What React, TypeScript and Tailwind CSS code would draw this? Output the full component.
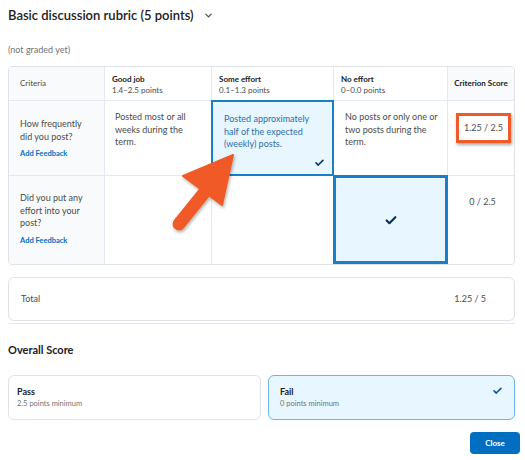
import { ChevronDown } from 'lucide-react';

const font = { fontFamily: 'Lato, "Noto Sans", sans-serif' };

function Check({ className = '' }: { className?: string }) {
  return (
    <svg viewBox="0 0 16 16" className={className} fill="none" stroke="currentColor" strokeWidth={2.4} strokeLinecap="round" strokeLinejoin="round">
      <path d="M3 8.5l3.2 3.2L13 4.8" />
    </svg>
  );
}

export default function App() {
  return (
    <div style={font} className="relative w-[525px] h-[460px] bg-white text-[#202122] overflow-hidden">
      <div className="px-2 pt-[6px]">
        {/* Title */}
        <div className="flex items-center gap-[9px] h-[18px]">
          <h1 className="text-[13px] leading-[18px] font-semibold">Basic discussion rubric (5 points)</h1>
          <ChevronDown className="w-[11px] h-[11px] text-[#494c4e]" strokeWidth={2.6} />
        </div>
        <div className="mt-[20px] text-[9px] leading-[12px] text-[#6e7477]">(not graded yet)</div>

        {/* Rubric table */}
        <div className="mt-[10px] w-[507px] border border-[#dfe3e8] rounded-[4px] overflow-hidden grid grid-cols-[96px_107px_122px_114px_1fr] grid-rows-[34px_75px_88px] text-[9px] leading-[12.5px] text-[#494c4e]">
          {/* header */}
          <div className="bg-[#f9fafb] border-r border-b border-[#e3e9f1] flex items-center pl-[11px] text-[8px]">Criteria</div>
          <div className="border-r border-b border-[#e3e9f1] pl-[7px] pt-[7px] text-[8px] leading-[11px]">
            <div className="font-bold text-[#202122]">Good job</div>
            <div>1.4–2.5 points</div>
          </div>
          <div className="border-r border-b border-[#e3e9f1] pl-[7px] pt-[7px] text-[8px] leading-[11px]">
            <div className="font-bold text-[#202122]">Some effort</div>
            <div>0.1–1.3 points</div>
          </div>
          <div className="border-r border-b border-[#e3e9f1] pl-[7px] pt-[7px] text-[8px] leading-[11px]">
            <div className="font-bold text-[#202122]">No effort</div>
            <div>0–0.0 points</div>
          </div>
          <div className="bg-[#f9fafb] border-b border-[#e3e9f1] flex items-center justify-center font-bold text-[8px] text-[#202122]">Criterion Score</div>

          {/* row 1 */}
          <div className="bg-[#f9fafb] border-r border-b border-[#e3e9f1] pl-[11px] pt-[17px]">
            <div>How frequently<br />did you post?</div>
            <div className="mt-[5px] text-[7.5px] font-bold text-[#006fbf]">Add Feedback</div>
          </div>
          <div className="border-r border-b border-[#e3e9f1] pl-[10px] pt-[10px] pr-[6px]">
            Posted most or all<br />weeks during the<br />term.
          </div>
          <div className="relative bg-[#e8f6ff] border-2 border-[#1a7fc9] -mt-px -ml-px pl-[11px] pt-[11px] text-[#2f6ea8]">
            Posted approximately<br />half of the expected<br />(weekly) posts.
            <Check className="absolute right-[7px] bottom-[6px] w-[11px] h-[11px] text-[#0a3b6b]" />
          </div>
          <div className="border-r border-b border-[#e3e9f1] pl-[11px] pt-[10px]">
            No posts or only one or<br />two posts during the<br />term.
          </div>
          <div className="border-b border-[#e3e9f1] flex justify-center pt-[12px] pl-[5px]">
            <div className="h-[30px] w-[55px] border-[3px] border-[#f05a28] shadow-[1px_2px_3px_rgba(0,0,0,0.35)] flex items-center justify-center">
              1.25 / 2.5
            </div>
          </div>

          {/* row 2 */}
          <div className="bg-[#f9fafb] border-r border-[#e3e9f1] pl-[11px] pt-[16px]">
            <div>Did you put any<br />effort into your<br />post?</div>
            <div className="mt-[5px] text-[7.5px] font-bold text-[#006fbf]">Add Feedback</div>
          </div>
          <div className="border-r border-[#e3e9f1]" />
          <div className="border-r border-[#e3e9f1]" />
          <div className="bg-[#e8f6ff] border-[3px] border-[#1a7fc9] -ml-px -mt-px flex items-center justify-center">
            <Check className="w-[14px] h-[14px] text-[#0a2f5c]" />
          </div>
          <div className="flex justify-center pt-[20px] pl-[3px]">0 / 2.5</div>
        </div>

        {/* Total */}
        <div className="mt-[12px] w-[507px] h-[44px] border border-[#dfe3e8] rounded-[6px] flex items-center justify-between pl-[12px] pr-[28px] text-[9px] text-[#494c4e]">
          <span>Total</span>
          <span>1.25 / 5</span>
        </div>
        <div className="mt-[2px] w-[507px] h-px bg-[#e3e9f1]" />

        {/* Overall score */}
        <h2 className="mt-[19px] text-[11px] leading-[14px] font-bold">Overall Score</h2>
        <div className="mt-[18px] flex gap-[7px]">
          <div className="w-[253px] h-[45px] border border-[#dfe3e8] rounded-[6px] pl-[8px] pt-[10px] leading-[12px]">
            <div className="text-[9px] font-bold">Pass</div>
            <div className="text-[7.5px] text-[#6e7477]">2.5 points minimum</div>
          </div>
          <div className="relative w-[247px] h-[45px] border border-[#6fb6e8] bg-[#e8f6ff] rounded-[6px] pl-[11px] pt-[10px] leading-[12px]">
            <div className="text-[9px] font-bold">Fail</div>
            <div className="text-[7.5px] text-[#6e7477]">0 points minimum</div>
            <Check className="absolute right-[11px] top-[9px] w-[11px] h-[11px] text-[#0a5aa0]" />
          </div>
        </div>

        <div className="mt-[12px] flex justify-end -mr-[3px]">
          <button className="w-[50px] h-[22px] rounded-[4px] bg-[#006fbf] text-white text-[8px] font-bold">Close</button>
        </div>
      </div>

      {/* annotation arrow */}
      <svg className="absolute left-0 top-0 pointer-events-none" width="525" height="460" viewBox="0 0 525 460">
        <defs>
          <filter id="sh" x="-20%" y="-20%" width="140%" height="140%">
            <feDropShadow dx="1" dy="2" stdDeviation="1.5" floodColor="#000" floodOpacity="0.3" />
          </filter>
        </defs>
        <g filter="url(#sh)" fill="#f05a28" stroke="#f05a28">
          <line x1="179" y1="224" x2="208" y2="188" strokeWidth="13" strokeLinecap="round" />
          <path d="M233 155 L183 176 L222 205 Z" strokeWidth="2" strokeLinejoin="round" />
        </g>
      </svg>
    </div>
  );
}
